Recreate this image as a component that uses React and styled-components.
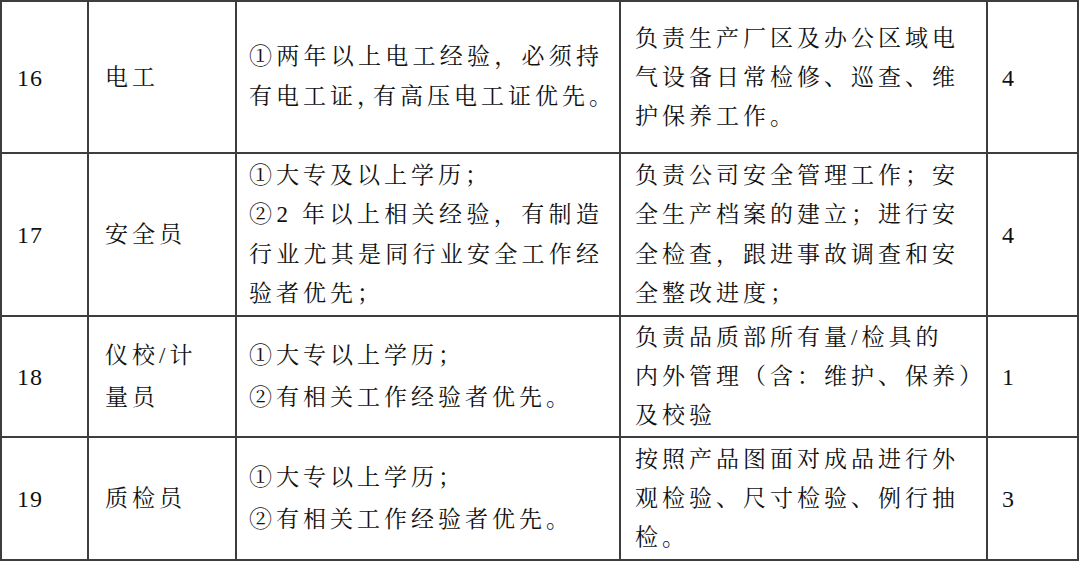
import React from "react";
import styled, { createGlobalStyle } from "styled-components";

const Global = createGlobalStyle`
  html, body { margin: 0; padding: 0; background: #ffffff; }
  body { font-family: "Liberation Serif", "Times New Roman", "Noto Serif CJK SC", "Noto Sans CJK SC", serif; }
`;

const Grid = styled.div`
  display: grid;
  grid-template-columns: 85px 146px 382px 365px 89px;
  grid-template-rows: 150px 161px 119px 121px;
  gap: 2px;
  padding: 2px;
  width: 1079px;
  box-sizing: border-box;
  background: #3d3d3d;
`;

const Cell = styled.div`
  background: #ffffff;
  display: flex;
  flex-direction: column;
  justify-content: center;
  padding-left: ${(p) => p.$pl}px;
  padding-right: ${(p) => p.$pr || 0}px;
  color: #111111;
  font-family: "Liberation Serif", "Times New Roman", "Noto Serif CJK SC", "Noto Sans CJK SC", serif;
  font-size: 23px;
  letter-spacing: 4px;
  line-height: ${(p) => p.$lh || 39}px;
  white-space: nowrap;
  overflow: visible;
`;

const NumCell = styled(Cell)`
  font-family: "Liberation Serif", "Times New Roman", serif;
  font-size: 24px;
  letter-spacing: 1px;
  padding-top: 2px;
`;

const Line = styled.div`
  text-align: left;
  text-align-last: ${(p) => (p.$full ? "justify" : "auto")};
`;

const Narrow = styled.span`
  letter-spacing: ${(p) => p.$ls}px;
`;

const rows = [
  {
    no: "16",
    title: ["电工"],
    req: [
      { t: "①两年以上电工经验，必须持", full: true },
      {
        t: (
          <>
            有电工证<Narrow $ls={-7}>，</Narrow>有高压电工证优先。
          </>
        ),
      },
    ],
    reqLh: 40,
    duty: ["负责生产厂区及办公区域电", "气设备日常检修、巡查、维", "护保养工作。"],
    count: "4",
  },
  {
    no: "17",
    title: ["安全员"],
    req: [
      { t: "①大专及以上学历；" },
      { t: "②2 年以上相关经验，有制造", full: true },
      { t: "行业尤其是同行业安全工作经", full: true },
      { t: "验者优先；" },
    ],
    reqLh: 39.5,
    duty: ["负责公司安全管理工作；安", "全生产档案的建立；进行安", "全检查，跟进事故调查和安", "全整改进度；"],
    dutyLh: 39.5,
    count: "4",
  },
  {
    no: "18",
    title: ["仪校/计", "量员"],
    titleLh: 42,
    req: [{ t: "①大专以上学历；" }, { t: "②有相关工作经验者优先。" }],
    reqLh: 42,
    duty: ["负责品质部所有量/检具的", "内外管理（含：维护、保养）", "及校验"],
    count: "1",
  },
  {
    no: "19",
    title: ["质检员"],
    req: [{ t: "①大专以上学历；" }, { t: "②有相关工作经验者优先。" }],
    reqLh: 42,
    duty: ["按照产品图面对成品进行外", "观检验、尺寸检验、例行抽", "检。"],
    count: "3",
  },
];

export default function App() {
  return (
    <>
      <Global />
      <Grid>
        {rows.map((r) => (
          <React.Fragment key={r.no}>
            <NumCell $pl={15}>{r.no}</NumCell>
            <Cell $pl={16} $lh={r.titleLh}>
              {r.title.map((t, i) => (
                <Line key={i}>{t}</Line>
              ))}
            </Cell>
            <Cell $pl={12} $pr={16} $lh={r.reqLh}>
              {r.req.map((l, i) => (
                <Line key={i} $full={l.full}>
                  {l.t}
                </Line>
              ))}
            </Cell>
            <Cell $pl={14} $lh={r.dutyLh}>
              {r.duty.map((t, i) => (
                <Line key={i}>{t}</Line>
              ))}
            </Cell>
            <NumCell $pl={14}>{r.count}</NumCell>
          </React.Fragment>
        ))}
      </Grid>
    </>
  );
}
